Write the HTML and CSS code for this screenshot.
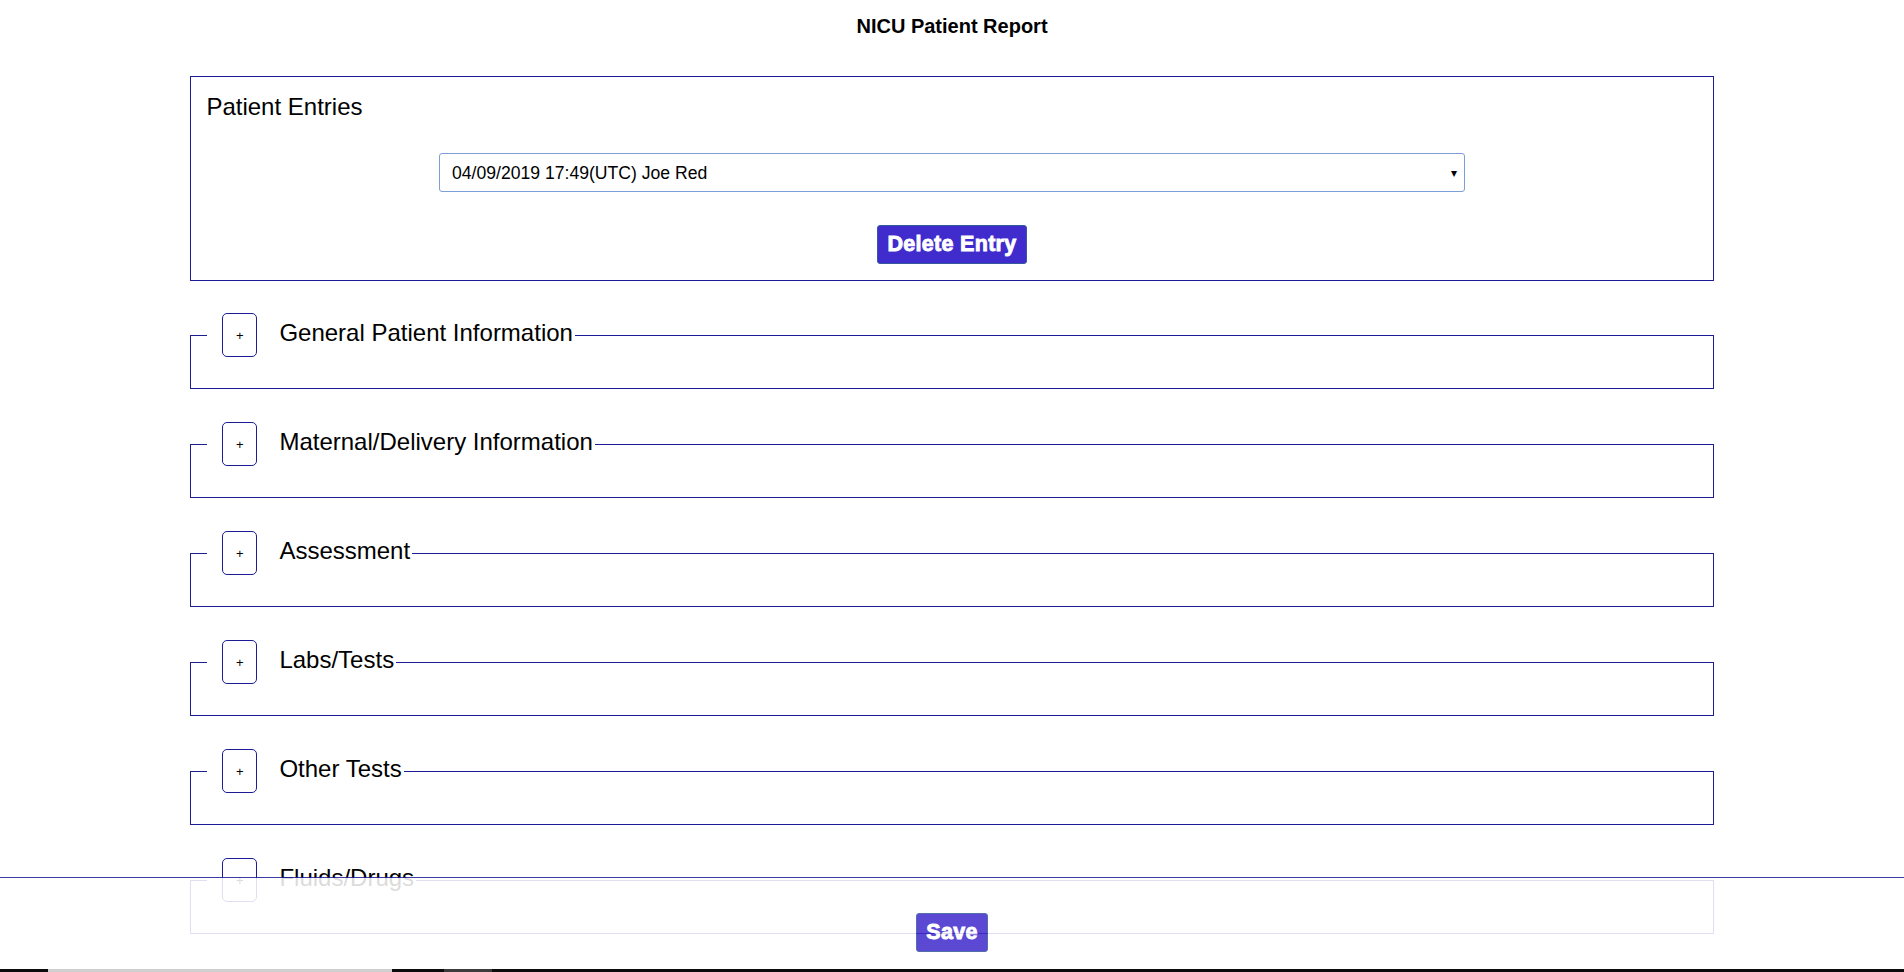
FILE: index.html
```html
<!DOCTYPE html>
<html lang="en">
<head>
<meta charset="utf-8">
<title>NICU Patient Report</title>
<link rel="stylesheet" href="styles.css">
</head>
<body>
<h1 class="page-title">NICU Patient Report</h1>
<main class="report">
  <section class="entries">
    <h2 class="entries-title">Patient Entries</h2>
    <div class="select-wrap">
      <select class="entry-select">
        <option>04/09/2019 17:49(UTC) Joe Red</option>
      </select>
    </div>
    <button class="btn btn-delete">Delete Entry</button>
  </section>

  <fieldset class="panel">
    <legend class="panel-legend"><button class="toggle">+</button><span class="panel-title">General Patient Information</span></legend>
  </fieldset>
  <fieldset class="panel">
    <legend class="panel-legend"><button class="toggle">+</button><span class="panel-title">Maternal/Delivery Information</span></legend>
  </fieldset>
  <fieldset class="panel">
    <legend class="panel-legend"><button class="toggle">+</button><span class="panel-title">Assessment</span></legend>
  </fieldset>
  <fieldset class="panel">
    <legend class="panel-legend"><button class="toggle">+</button><span class="panel-title">Labs/Tests</span></legend>
  </fieldset>
  <fieldset class="panel">
    <legend class="panel-legend"><button class="toggle">+</button><span class="panel-title">Other Tests</span></legend>
  </fieldset>
  <fieldset class="panel">
    <legend class="panel-legend"><button class="toggle">+</button><span class="panel-title">Fluids/Drugs</span></legend>
  </fieldset>
</main>
<footer class="footer">
  <button class="btn btn-save">Save</button>
</footer>
<div class="taskbar"><span class="tb-a"></span><span class="tb-b"></span></div>
</body>
</html>
```
FILE: styles.css
```css
html {
  scrollbar-width: none;
}
html::-webkit-scrollbar {
  display: none;
}
body {
  margin: 0;
  background: #fff;
  color: #000;
  font-family: "Liberation Sans", Arial, sans-serif;
}
.page-title {
  margin: 15px 0 0;
  font-size: 20px;
  line-height: 23px;
  font-weight: bold;
  text-align: center;
}
.report {
  width: 80%;
  margin: 38px auto 0;
  padding-bottom: 120px;
}
.entries {
  border: 1px solid #1c1c96;
  padding: 16px 14px 16px;
  display: flex;
  flex-direction: column;
  align-items: center;
  margin-bottom: 32px;
}
.entries-title {
  align-self: flex-start;
  margin: 0;
  padding-left: 1px;
  font-size: 24px;
  line-height: 28px;
  font-weight: normal;
}
.select-wrap {
  position: relative;
  width: 1026px;
  margin-top: 32px;
}
.entry-select {
  display: block;
  width: 100%;
  height: 39px;
  box-sizing: border-box;
  border: 1px solid #7d9fd8;
  border-radius: 3px;
  padding: 0 30px 0 12px;
  background: #fff;
  color: #000;
  font-family: "Liberation Sans", Arial, sans-serif;
  font-size: 17.6px;
  appearance: none;
  -webkit-appearance: none;
  outline: none;
}
.select-wrap::after {
  content: "\25BE";
  position: absolute;
  right: 8px;
  top: 50%;
  transform: translateY(-50%);
  font-size: 12px;
  color: #000;
  pointer-events: none;
}
.btn {
  height: 39px;
  box-sizing: border-box;
  padding: 0 9px;
  background: #402bcc;
  color: #fff;
  border: 1px solid #36589c;
  border-radius: 3px;
  font-family: "Liberation Sans", Arial, sans-serif;
  font-weight: bold;
  font-size: 21.5px;
  letter-spacing: 0.3px;
  -webkit-text-stroke: 0.9px #fff;
}
.btn-delete {
  margin-top: 33px;
}
.panel {
  margin: 0 0 33px;
  padding: 0 16px 31px;
  border: 1px solid #1c1c96;
  min-width: 0;
}
.panel-legend {
  padding: 0 2px 0 0;
  display: flex;
  align-items: center;
}
.toggle {
  width: 35px;
  height: 44px;
  margin: 0 22px 0 15px;
  padding: 0;
  border: 1px solid #1c1c96;
  border-radius: 5px;
  background: #fff;
  color: #000;
  font-family: "Liberation Sans", Arial, sans-serif;
  font-size: 13px;
}
.panel-title {
  font-size: 24px;
  line-height: 28px;
  margin-top: -5px;
}
.footer {
  position: fixed;
  left: 0;
  right: 0;
  bottom: 3px;
  height: 92px;
  box-sizing: border-box;
  border-top: 1px solid #1c1c96;
  background: #fff;
  opacity: 0.86;
  display: flex;
  justify-content: center;
  align-items: flex-start;
  padding-top: 35px;
}
.taskbar {
  position: fixed;
  left: 0;
  right: 0;
  bottom: 0;
  height: 3px;
  background: #0c0c0c;
  display: flex;
}
.tb-a {
  margin-left: 48px;
  width: 344px;
  background: #d0d0d0;
}
.tb-b {
  margin-left: 52px;
  width: 48px;
  background: #3c3c3c;
}
```
